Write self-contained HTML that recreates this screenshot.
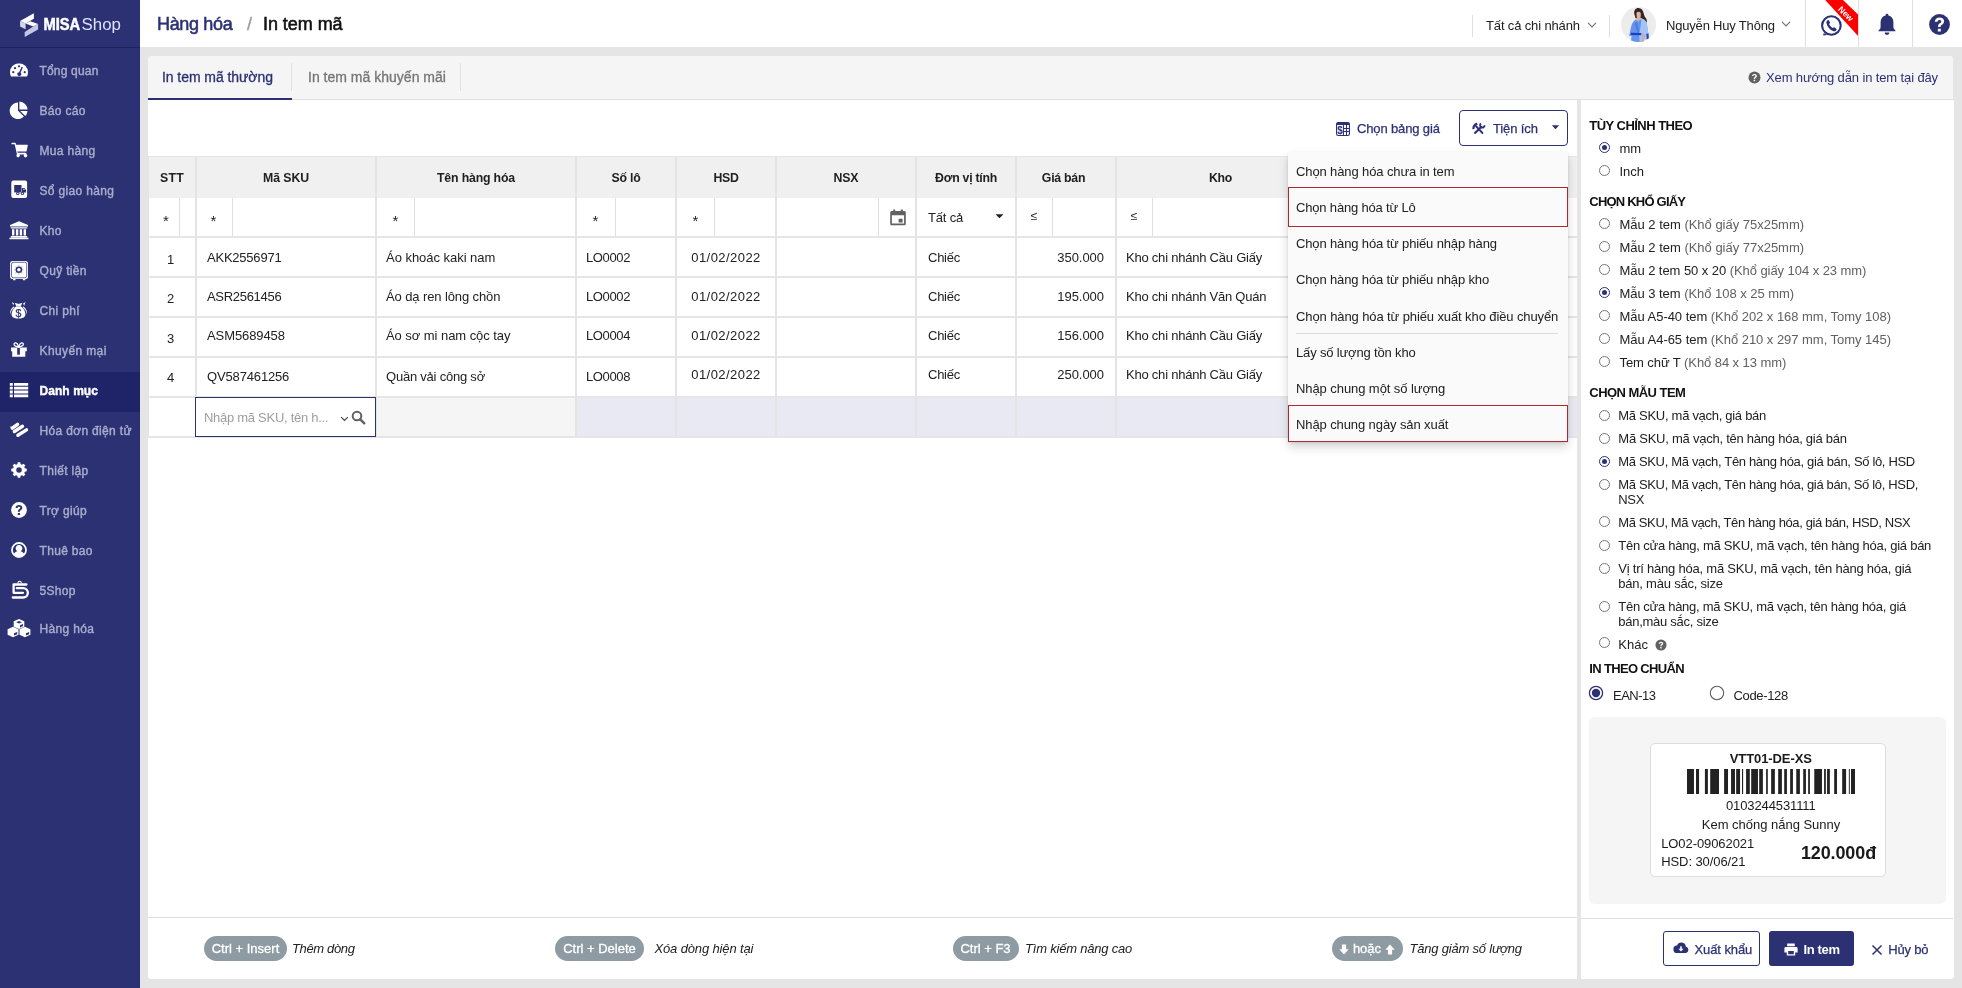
<!DOCTYPE html>
<html lang="vi">
<head>
<meta charset="utf-8">
<title>In tem mã</title>
<style>
*{box-sizing:border-box;margin:0;padding:0}
html,body{width:1962px;height:988px;overflow:hidden}
body{position:relative;background:#e5e5e5;font-family:"Liberation Sans",sans-serif;font-size:13px;color:#212121;-webkit-font-smoothing:antialiased}
.abs{position:absolute}
#sidebar,#header,#tabbar,#main,#right,#dd{will-change:transform}
.nw{white-space:nowrap}
/* ---------- sidebar ---------- */
#sidebar{position:absolute;left:0;top:0;width:140px;height:988px;background:#2b3173}
#logo{position:absolute;left:0;top:0;width:140px;height:48px;border-bottom:1px solid #1c2160}
.mi{position:absolute;left:0;width:140px;height:40px;color:#aaadcb;font-size:12px;white-space:nowrap}
.mi span{position:absolute;left:39.500px;top:11px;line-height:16px;-webkit-text-stroke:0.4px;letter-spacing:.33px}
.mi svg{position:absolute;left:9px;top:8px;width:20px;height:20px;fill:#fff;overflow:visible}
.mi.act{background:#1f2469;color:#fff;font-weight:bold}
/* ---------- header ---------- */
#header{position:absolute;left:140px;top:0;width:1822px;height:47px;background:#fff}
.vline{position:absolute;width:1px;background:#e0e0e0}
/* ---------- panels ---------- */
#tabbar{position:absolute;left:148px;top:56px;width:1805px;height:44px;background:#f5f5f5;border-bottom:1px solid #e0e0e0;border-radius:3px 3px 0 0}
#main{position:absolute;left:148px;top:100px;width:1429px;height:879px;background:#fff;border-radius:0 0 0 3px}
#right{position:absolute;left:1581px;top:100px;width:372.500px;height:879px;background:#fff;border-radius:0 0 3px 0}
/*MAINCSS*/
/* tabs */
.tab{position:absolute;top:0;height:44px;font-size:14px;line-height:18px;white-space:nowrap}
.tab span{position:absolute;top:12px;left:0}
/* table */
#grid{position:absolute;left:0;top:56px;width:1429px;height:282px}
.hd{position:absolute;top:1px;height:41px;background:#f0f0f0}
.hl{position:absolute;top:14px;font-weight:bold;font-size:12.300px;line-height:16px;white-space:nowrap;transform:translateX(-50%);color:#212121}
.cv{position:absolute;top:0;width:2px;background:#e4e4e4;height:281px}
.rh{position:absolute;left:0;width:1429px;height:2px;background:#e6e6e6}
.fv{position:absolute;top:42px;width:1px;height:38px;background:#e0e0e0}
.fs{position:absolute;top:54px;font-size:13px;line-height:16px;color:#212121;transform:translateX(-50%)}
.c{position:absolute;font-size:13px;line-height:16px;white-space:nowrap;color:#212121}
.pill{position:absolute;top:836px;height:25px;border-radius:13px;background:#8e9ba3;color:#fff;font-size:13px;line-height:25px;text-align:center;white-space:nowrap;-webkit-text-stroke:0.3px #fff}
.ptx{position:absolute;top:841px;font-size:13px;line-height:16px;font-style:italic;white-space:nowrap;color:#212121}
/*/MAINCSS*/
/*RCSS*/
#dd{position:absolute;left:1288px;top:152px;width:280px;height:290px;background:#fafafa;box-shadow:0 5px 10px rgba(0,0,0,.17),0 1px 3px rgba(0,0,0,.10);border-radius:2px}
.di{position:absolute;left:8px;font-size:13px;line-height:16px;white-space:nowrap;color:#212121}
.rb{position:absolute;left:0;width:280px;border:1.300px solid #b3282d;}
.sec{position:absolute;left:8px;font-weight:bold;font-size:13px;line-height:16px;white-space:nowrap;color:#111}
.rd{position:absolute;width:11px;height:11px;border-radius:50%;border:1px solid #757575;background:#fff}
.rd.on{border-color:#2b3173}
.rd.on:after{content:"";position:absolute;left:2px;top:2px;width:5px;height:5px;border-radius:50%;background:#2b3173}
.rl{position:absolute;font-size:13px;line-height:15px;white-space:nowrap;color:#212121}
.rl i{font-style:normal;color:#616161}
.rd2{position:absolute;width:15px;height:15px;border-radius:50%;border:1px solid #616161;background:#fff}
.rd2.on{border:1.5px solid #2b3173}
.rd2.on:after{content:"";position:absolute;left:2.500px;top:2.500px;width:7px;height:7px;border-radius:50%;background:#2b3173}
.pv{position:absolute;white-space:nowrap;color:#1a1a1a;font-family:"Liberation Sans",sans-serif}
/*/RCSS*/
/*FIT*/
#hl0{letter-spacing:0.250px}
#hl1{letter-spacing:-0.080px}
#hl2{letter-spacing:-0.164px}
#hl3{letter-spacing:-0.175px}
#hl4{letter-spacing:-0.350px}
#hl5{letter-spacing:-0.150px}
#hl6{letter-spacing:-0.260px}
#hl7{letter-spacing:-0.250px}
#hl8{letter-spacing:-0.350px}
#m-tongquan{letter-spacing:0.180px}
#m-sogiao{letter-spacing:0.339px}
#m-khuyenmai{letter-spacing:0.386px}
#m-danhmuc{letter-spacing:0.059px}
#m-hoadon{letter-spacing:0.337px}
#t1{letter-spacing:-0.343px}
#t3{letter-spacing:-0.050px}
#h-branch{letter-spacing:-0.140px}
#h-name{letter-spacing:-0.187px}
#tab1{letter-spacing:-0.067px}
#tab2{letter-spacing:0.011px}
#guide{letter-spacing:-0.126px}
#bg{letter-spacing:-0.142px}
#ti{letter-spacing:-0.114px}
#r0sku{letter-spacing:-0.222px}
#r1sku{letter-spacing:-0.300px}
#r2sku{letter-spacing:-0.089px}
#r3sku{letter-spacing:-0.150px}
#r0ten{letter-spacing:-0.031px}
#r1ten{letter-spacing:-0.111px}
#r2ten{letter-spacing:-0.058px}
#r3ten{letter-spacing:-0.220px}
#r0lo{letter-spacing:-0.380px}
#r1lo{letter-spacing:-0.380px}
#r2lo{letter-spacing:-0.380px}
#r3lo{letter-spacing:-0.380px}
#r0hsd{letter-spacing:0.444px}
#r1hsd{letter-spacing:0.444px}
#r2hsd{letter-spacing:0.444px}
#r3hsd{letter-spacing:0.444px}
#r0dvt{letter-spacing:-0.250px}
#r1dvt{letter-spacing:-0.250px}
#r2dvt{letter-spacing:-0.250px}
#r3dvt{letter-spacing:-0.250px}
#r0gia{letter-spacing:-0.033px}
#r1gia{letter-spacing:-0.033px}
#r2gia{letter-spacing:-0.033px}
#r3gia{letter-spacing:-0.033px}
#r0kho{letter-spacing:-0.224px}
#r1kho{letter-spacing:-0.229px}
#r2kho{letter-spacing:-0.224px}
#r3kho{letter-spacing:-0.224px}
#tatca{letter-spacing:-0.160px}
#ph{letter-spacing:-0.280px}
#di0{letter-spacing:-0.113px}
#di1{letter-spacing:-0.172px}
#di2{letter-spacing:-0.139px}
#di3{letter-spacing:-0.140px}
#di4{letter-spacing:-0.105px}
#di5{letter-spacing:-0.158px}
#di6{letter-spacing:-0.077px}
#di7{letter-spacing:-0.100px}
#s1{letter-spacing:-0.531px}
#s2{letter-spacing:-0.792px}
#s3{letter-spacing:-0.545px}
#s4{letter-spacing:-0.658px}
#pa0{letter-spacing:-0.015px}
#pa1{letter-spacing:-0.015px}
#pa2{letter-spacing:-0.062px}
#pa3{letter-spacing:-0.038px}
#pa4{letter-spacing:-0.034px}
#pa5{letter-spacing:-0.034px}
#pa6{letter-spacing:-0.076px}
#te0{letter-spacing:-0.291px}
#te1{letter-spacing:-0.243px}
#te2{letter-spacing:-0.337px}
#te4{letter-spacing:-0.383px}
#te5{letter-spacing:-0.253px}
#l_ean{letter-spacing:-0.500px}
#l_c128{letter-spacing:-0.343px}
#b_xk{letter-spacing:-0.088px}
#b_in{letter-spacing:-0.360px}
#b_huy{letter-spacing:-0.200px}
#pt1{letter-spacing:-0.350px}
#pt2{letter-spacing:-0.144px}
#pt3{letter-spacing:-0.206px}
#pt4{letter-spacing:-0.200px}
#pv1{letter-spacing:-0.080px}
#pv2{letter-spacing:-0.117px}
#pv3{letter-spacing:-0.016px}
#pv4{letter-spacing:-0.083px}
#pv5{letter-spacing:-0.083px}
#pv6{letter-spacing:-0.129px}
#te3{letter-spacing:-0.340px}
#te6{letter-spacing:-0.220px}
#te7{letter-spacing:-0.270px}
/*/FIT*/
</style>
</head>
<body>
<!-- SIDEBAR -->
<div id="sidebar">
  <div id="logo"><svg class="abs" style="left:0;top:0" width="140" height="47" viewBox="0 0 140 47">
<polygon points="33.85,13.26 33.85,18.76 25.6,23.53 20.09,21.02" fill="#fff"/>
<polygon points="20.09,21.02 25.6,23.53 25.6,29.16 20.09,26.41" fill="#d4d6ee"/>
<polygon points="25.6,23.53 30.18,21.21 38.13,23.96 33.24,26.41" fill="#fff"/>
<polygon points="38.13,23.96 38.13,29.46 24.68,37.11 24.68,31.91 33.24,26.41" fill="#c4c6e4"/>
<text x="43.4" y="29.8" font-family="Liberation Sans, sans-serif" font-weight="bold" font-size="16.3" fill="#fff" stroke="#fff" stroke-width="0.5" textLength="36.8" lengthAdjust="spacingAndGlyphs">MISA</text>
<text x="81.6" y="29.8" font-family="Liberation Sans, sans-serif" font-size="16.3" fill="#dfe1fb" textLength="39.4" lengthAdjust="spacingAndGlyphs">Shop</text>
</svg></div>
  <!--MENU-->
  <div class="mi" style="top:52px"><svg viewBox="0 0 20 20"><path d="M10 3.2a9 9 0 0 0-9 9c0 1.3.3 2.6.8 3.7.2.4.6.6 1 .6h14.4c.4 0 .8-.2 1-.6.5-1.100.8-2.400.8-3.700a9 9 0 0 0-9-9z"/><g fill="#2b3173"><circle cx="4.300" cy="12.200" r="1.100"/><circle cx="6" cy="8.200" r="1.100"/><circle cx="10" cy="6.300" r="1.100"/><circle cx="15.700" cy="12.200" r="1.100"/><path d="M12.600 6.700l1.300.5-2.300 5.600a1.900 1.900 0 1 1-1.500-.5z"/></g></svg><span id="m-tongquan">Tổng quan</span></div>
  <div class="mi" style="top:92px"><svg viewBox="0 0 20 20"><path d="M9 2.500v8.200l5.900 5.900A8.300 8.300 0 1 1 9 2.500z"/><path d="M10.400 1.500a8.300 8.300 0 0 1 8.100 8.100h-8.100z"/><path d="M11.200 10.900h7.300a8.300 8.300 0 0 1-2.200 5.100z"/></svg><span id="m-baocao">Báo cáo</span></div>
  <div class="mi" style="top:132px"><svg viewBox="0 0 20 20"><g transform="translate(10.900 9.700) scale(0.92) translate(-10 -10)"><path d="M1.500 2.500h3.200c.4 0 .7.300.8.600l.3 1.400h12c.5 0 .9.500.8 1l-1.300 5.800c-.1.400-.4.600-.8.600H7.300l.3 1.500h8.700c.5 0 .9.500.8 1l-.1.300a1.900 1.900 0 1 1-2.300.4H9.600a1.900 1.900 0 1 1-2.800-.2L4.300 4.200H1.500c-.400 0-.700-.400-.700-.800s.300-.900.700-.900z"/></g></svg><span id="m-muahang">Mua hàng</span></div>
  <div class="mi" style="top:172px"><svg viewBox="0 0 20 20"><path d="M4.300.6h11.800a2 2 0 0 1 2 2V16a2 2 0 0 1-2 2H4.300a2 2 0 0 1-2-2V2.600a2 2 0 0 1 2-2z"/><g fill="#2b3173"><path d="M5.200 5h7.300v7.400H5.200z"/><path d="M12.900 7.900h2.300l1.800 2.100v2.400h-4.100z"/><circle cx="8.800" cy="13.400" r="1.700"/><circle cx="13.400" cy="13.400" r="1.700"/></g><g fill="#fff"><circle cx="8.800" cy="13.400" r=".75"/><circle cx="13.400" cy="13.400" r=".75"/><path d="M14 8.700h1l1.100 1.300H14z" opacity=".6"/></g></svg><span id="m-sogiao">Sổ giao hàng</span></div>
  <div class="mi" style="top:212px"><svg viewBox="0 0 20 20"><path d="M10 1.200l9 3.800v1.500H1V5zM1.800 7.300h16.400v1.200H1.800zM3 9.200h2.400v6.300H3zM6.900 9.200h2.400v6.300H6.900zM10.700 9.200h2.400v6.300h-2.400zM14.600 9.200H17v6.300h-2.400zM1.800 16.100h16.400v1.300H1.800zM.5 17.800h19v1.500H.5z"/></svg><span id="m-kho">Kho</span></div>
  <div class="mi" style="top:252px"><svg viewBox="0 0 20 20"><rect x="1.100" y=".9" width="17.900" height="18.200" rx="2.600"/><path d="M4.100 18.800h2.400v1.400H4.100zM13.800 18.800h2.500v1.400h-2.500z"/><rect x="2.500" y="2.300" width="15.200" height="15.500" rx="2" fill="none" stroke="#2b3173" stroke-width=".7"/><g fill="#2b3173"><circle cx="9.900" cy="9.800" r="3.300"/><g opacity=".35"><circle cx="9.900" cy="5.700" r=".7"/><circle cx="9.900" cy="13.900" r=".7"/><circle cx="5.800" cy="9.800" r=".7"/><circle cx="14" cy="9.800" r=".7"/><circle cx="7" cy="6.900" r=".7"/><circle cx="12.800" cy="6.900" r=".7"/><circle cx="7" cy="12.700" r=".7"/><circle cx="12.800" cy="12.700" r=".7"/></g></g><circle cx="9.900" cy="9.800" r="1.800" fill="#fff"/></svg><span id="m-quytien">Quỹ tiền</span></div>
  <div class="mi" style="top:292px"><svg viewBox="0 0 20 20"><path d="M5.900 3.100c1.300-.7 2.500.6 3.700.6s2.500-1.300 3.600-.6L11.900 6.300c2.900 1.900 4.500 5.300 4.500 8 0 2.800-2 4.200-6.900 4.200s-6.900-1.400-6.900-4.200c0-2.700 1.700-6.100 4.600-8z"/><path d="M4.500 6.400C2 8.600.6 11.700 1.100 14.500c.5-2.800 2.100-5.400 4.400-7.200zM14.600 6.400c2.500 2.200 3.900 5.300 3.400 8.100-.5-2.800-2.100-5.400-4.400-7.200z"/><path d="M2.700 2.100l2.500 1.300-.9 1.700zM16.600 2.100l-2.500 1.300 1 2.300z"/><path d="M7.200 6.300h4.600" stroke="#2b3173" stroke-width=".7" opacity=".5"/><text x="9.400" y="16.800" text-anchor="middle" font-family="Liberation Sans, sans-serif" font-size="10.500" fill="#2b3173" stroke="#2b3173" stroke-width=".25">$</text></svg><span id="m-chiphi">Chi phí</span></div>
  <div class="mi" style="top:332px"><svg viewBox="0 0 20 20"><path d="M2 7.500h15.800v3.700H2zM3.200 11.200h13.100v5.500H3.200z"/><path d="M8.200 8h2.700v6.700H8.200z" fill="#2b3173"/><g fill="none" stroke="#fff" stroke-width="1.250"><path d="M9.700 7c-1.600-.3-4.300-.9-4.600-2.400-.2-1.100.7-1.900 1.700-1.700 1.500.3 2.400 2.400 2.900 4.100z"/><path d="M9.700 7c1.600-.3 4.300-.9 4.600-2.400.2-1.100-.7-1.900-1.700-1.700-1.500.3-2.400 2.400-2.900 4.100z"/></g></svg><span id="m-khuyenmai">Khuyến mại</span></div>
  <div class="mi act" style="top:372px"><svg viewBox="0 0 20 20"><path d="M.8 3h3v2.800h-3zM5 3h14.200v2.800H5zM.8 6.800h3v2.800h-3zM5 6.800h14.200v2.800H5zM.8 10.600h3v2.800h-3zM5 10.600h14.200v2.800H5zM.8 14.400h3v2.800h-3zM5 14.400h14.200v2.800H5z"/></svg><span id="m-danhmuc">Danh mục</span></div>
  <div class="mi" style="top:412px"><svg viewBox="0 0 20 20"><g stroke="#fff" stroke-width="3.400" stroke-linecap="round" fill="none"><path d="M3.300 8.200L8.600 4.300"/><path d="M5.400 11.500L13.500 6.300"/><path d="M8.900 15.300L17.500 9.900"/></g><path d="M.8 6.600l3 .4-.6 2.600z"/></svg><span id="m-hoadon">Hóa đơn điện tử</span></div>
  <div class="mi" style="top:452px"><svg viewBox="0 0 20 20"><g transform="translate(10 10) scale(0.86) translate(-10 -10)"><path d="M18.200 11.500v-3l-2.200-.4c-.2-.6-.4-1.100-.7-1.600l1.300-1.800-2.100-2.100-1.800 1.300c-.5-.3-1-.5-1.600-.7L10.700 1h-3l-.400 2.200c-.6.200-1.100.400-1.600.700L3.900 2.600 1.800 4.700l1.300 1.800c-.3.500-.5 1-.7 1.600L.2 8.500v3l2.200.4c.2.600.4 1.100.7 1.600l-1.300 1.800 2.100 2.100 1.800-1.300c.5.300 1 .5 1.600.7l.4 2.200h3l.4-2.200c.6-.2 1.100-.4 1.600-.7l1.800 1.300 2.100-2.100-1.300-1.800c.3-.5.5-1 .7-1.600zM9.200 13.200a3.200 3.200 0 1 1 0-6.400 3.200 3.200 0 0 1 0 6.400z" transform="translate(.8 0)"/></g></svg><span id="m-thietlap">Thiết lập</span></div>
  <div class="mi" style="top:492px"><svg viewBox="0 0 20 20"><g transform="translate(10 10) scale(0.93) translate(-10 -10)"><circle cx="10" cy="10" r="8.500"/><path fill="#2b3173" d="M10 4.500c2.100 0 3.600 1.200 3.600 3 0 1.400-.8 2.100-1.700 2.700-.7.500-.9.800-.9 1.500v.3H8.800v-.5c0-1.200.5-1.800 1.400-2.400.7-.5 1.100-.8 1.100-1.500s-.5-1.100-1.300-1.100-1.400.5-1.500 1.400H6.300c.1-2.100 1.600-3.400 3.700-3.400zM8.700 13.200h2.400v2.300H8.700z"/></g></svg><span id="m-trogiup">Trợ giúp</span></div>
  <div class="mi" style="top:532px"><svg viewBox="0 0 20 20"><g transform="translate(10 10) scale(0.93) translate(-10 -10)"><path d="M10 1.500a8.500 8.500 0 1 0 0 17 8.500 8.500 0 0 0 0-17zm0 2a6.500 6.500 0 0 1 5.300 10.300c-.9-1.400-2.400-2.300-3.500-2.500a3.600 3.600 0 1 0-3.600 0c-1.100.2-2.600 1.100-3.500 2.500A6.500 6.500 0 0 1 10 3.500z" fill-rule="evenodd"/></g></svg><span id="m-thuebao">Thuê bao</span></div>
  <div class="mi" style="top:572px"><svg viewBox="0 0 20 20"><g stroke="#fff" fill="none" stroke-linecap="round" stroke-linejoin="round"><path d="M17.400 4.500H4.600v8.300h9.400" stroke-width="2.300"/><path d="M7.800 8.200h6.400a4.650 4.650 0 0 1 0 9.300H3.800" stroke-width="2.300"/><path d="M8.900 3a1.700 1.700 0 0 1 3.400 0" stroke-width="1.100"/></g></svg><span id="m-5shop">5Shop</span></div>
  <div class="mi" style="top:610px"><svg viewBox="0 0 20 20"><g><path d="M10 1l5.300 2.300v5.400L10 11 4.700 8.700V3.300z"/><path d="M4 8.800l5.500 2.400v5.600L4 19.200l-5.400-2.400v-5.600z"/><path d="M15.900 8.800l5.500 2.400v5.600l-5.500 2.400-5.400-2.400v-5.600z"/></g><g fill="#2b3173"><path d="M10 3.100l2.900 1.200L10 5.500 7.100 4.300z"/><path d="M11 7.200l3-1.300v2.200l-3 1.300z"/><path d="M4 10.900l2.900 1.200L4 13.300l-2.900-1.200z" opacity=".0"/><path d="M5 15.300l3.200-1.400v2.300L5 17.600z"/><path d="M16.900 15.300l3.200-1.400v2.300l-3.200 1.400z"/></g></svg><span id="m-hanghoa">Hàng hóa</span></div>
  <!--/MENU-->
</div>
<!-- HEADER -->
<div id="header">
  <!--HEADER-->
  <div class="abs nw" id="t1" style="left:17px;top:12px;font-size:18px;line-height:24px;color:#2b3173;-webkit-text-stroke:0.55px #2b3173">Hàng hóa</div>
  <div class="abs nw" id="t2" style="left:107px;top:12px;font-size:18px;line-height:24px;color:#9e9e9e;-webkit-text-stroke:0.4px #9e9e9e">/</div>
  <div class="abs nw" id="t3" style="left:123px;top:12px;font-size:18px;line-height:24px;color:#111;-webkit-text-stroke:0.55px #111">In tem mã</div>
  <div class="vline" style="left:1332px;top:15px;height:22px"></div>
  <div class="abs nw" id="h-branch" style="left:1346px;top:18px;line-height:16px;font-size:13px;color:#212121">Tất cả chi nhánh</div>
  <svg class="abs" style="left:1447px;top:21px" width="10" height="8" viewBox="0 0 10 8"><path d="M1 1.800l4 4 4-4" fill="none" stroke="#757575" stroke-width="1.200"/></svg>
  <div class="vline" style="left:1469px;top:15px;height:22px"></div>
  <svg class="abs" style="left:1481px;top:7px" width="35" height="35" viewBox="0 0 35 35">
    <defs><clipPath id="avc"><circle cx="17.500" cy="17.500" r="17.500"/></clipPath></defs>
    <circle cx="17.500" cy="17.500" r="17.500" fill="#ececec"/>
    <g clip-path="url(#avc)">
      <path d="M13.200 6.500c-.3-3.300 1.600-5.500 4.300-5.500 2.900 0 4.600 2.300 5.200 5.600.4 2.300 1.500 4 2.800 5.300l.6 4.100-2.600-3.200-3-1.500h-6z" fill="#35241f"/>
      <path d="M15.600 5.400c1.100-.9 3.200-.8 4 .4.400 1.700.2 4.200-.4 5.700l-2.400 1c-1-1.700-1.600-4.900-1.200-7.100z" fill="#dcb7a5"/>
      <path d="M15.800 10.500h3.600l.6 2.500-2.800 2-2.200-2z" fill="#d9b3a2"/>
      <path d="M14.600 12.600l2.600 1.800 3.200-2.400c2.600.5 4.700 1.900 5.300 4l1.800 11.600-.2 4.200-2.700.6-1.300-3-.5 7H9.800l.7-7.600-2.300.2 1.400-6.700c.5-4 2.200-8 5-9.700z" fill="#6494ec"/>
      <path d="M20.400 12c2.600.5 4.700 1.900 5.300 4l1.800 11.600-.2 4.200-2.700.6-1.300-3-.5 7h-4.200l-.4-9.500 1.300-6.500z" fill="#a4c4f7"/>
      <path d="M16.200 14.800l2 10.500-1.400 1.400-3.200-10z" fill="#4f7fe0"/>
      <path d="M10 25.800l10.300.3v2.100l-10.800-.2z" fill="#1f3fc0"/>
      <path d="M25.300 26.800l2.200-.4.300 5.200-2 .8z" fill="#2447c8"/>
      <path d="M21.100 26.800l2-.4.900 3.200-1.300 6h-2z" fill="#d3aa9e"/>
    </g>
  </svg>
  <div class="abs nw" id="h-name" style="left:1526px;top:17.500px;line-height:16px;font-size:13px;color:#212121">Nguyễn Huy Thông</div>
  <svg class="abs" style="left:1641px;top:20px" width="10" height="8" viewBox="0 0 10 8"><path d="M1 1.800l4 4 4-4" fill="none" stroke="#757575" stroke-width="1.200"/></svg>
  <div class="vline" style="left:1665px;top:0;height:47px"></div>
  <svg class="abs" style="left:1680px;top:0" width="40" height="47" viewBox="0 0 40 47">
    <circle cx="11.400" cy="25.500" r="9.300" fill="none" stroke="#2b3173" stroke-width="2.100"/>
    <path d="M7.600 20.300c.4-.4 1-.4 1.300.100l1.100 1.800c.2.400.1.800-.2 1.100l-.7.600c.7 1.700 2 3.200 3.700 4.200l.7-.6c.3-.3.800-.3 1.100-.1l1.700 1.300c.4.300.4.900.1 1.300l-.6.700c-.6.600-1.500.800-2.300.5-3.600-1.400-6.300-4.500-7.100-8.300-.2-.8.100-1.600.7-2.100z" fill="#2b3173"/>
    <path d="M3 33.800l2.800-.4 1 1.700-3.300.3z" fill="#2b3173"/>
    <polygon points="5.200,0 23,0 38.800,15.300 38.800,36.700" fill="#f00"/>
    <text transform="translate(25.800 13.800) rotate(45)" text-anchor="middle" y="2.900" font-family="Liberation Sans, sans-serif" font-weight="bold" font-size="8.500" fill="#fff">New</text>
  </svg>
  <div class="vline" style="left:1718px;top:0;height:47px"></div>
  <svg class="abs" style="left:1737px;top:13px" width="20" height="23" viewBox="0 0 20 23">
    <path d="M10 .8c.8 0 1.400.6 1.400 1.300v.5c3 .7 5 3.300 5 6.500v4.800c0 1 .4 1.900 1.100 2.600l.9.900c.3.300.1.900-.4.900H2c-.5 0-.7-.6-.4-.9l.9-.9c.7-.7 1.100-1.600 1.100-2.600V9.100c0-3.200 2-5.800 5-6.500v-.5c0-.7.600-1.300 1.400-1.300z" fill="#2b3173"/>
    <path d="M7.600 19.500h4.800a2.400 2.400 0 0 1-4.800 0z" fill="#2b3173"/>
  </svg>
  <div class="vline" style="left:1772px;top:0;height:47px"></div>
  <svg class="abs" style="left:1789px;top:14px" width="21" height="21" viewBox="0 0 21 21">
    <circle cx="10.500" cy="10.500" r="10.400" fill="#2b3173"/>
    <path transform="translate(10.500 10.500) scale(1.180) translate(-10.500 -10.600)" d="M10.500 4.600c2.300 0 3.900 1.300 3.900 3.200 0 1.500-.8 2.300-1.900 3-.8.500-1 .9-1 1.600v.4H9.300v-.6c0-1.300.5-2 1.500-2.600.8-.5 1.200-.9 1.200-1.600 0-.8-.6-1.300-1.500-1.300s-1.600.6-1.700 1.600H6.500c.1-2.300 1.700-3.700 4-3.700zM9.100 14.200h2.500v2.400H9.100z" fill="#fff"/>
  </svg>
  <!--/HEADER-->
</div>
<!-- TAB BAR -->
<div id="tabbar">
  <!--TABS-->
  <div class="tab" id="tab1" style="left:14px;color:#2b3173;-webkit-text-stroke:0.3px #2b3173"><span>In tem mã thường</span></div>
  <div class="abs" style="left:0;top:42px;width:144px;height:2px;background:#2b3173"></div>
  <div class="vline" style="left:143px;top:7px;height:28px"></div>
  <div class="tab" id="tab2" style="left:160px;color:#757575;-webkit-text-stroke:0.3px #757575"><span>In tem mã khuyến mãi</span></div>
  <div class="vline" style="left:312px;top:7px;height:28px"></div>
  <svg class="abs" style="left:1600px;top:15px" width="13" height="13" viewBox="0 0 13 13"><circle cx="6.500" cy="6.500" r="6" fill="#616161"/><path d="M6.500 2.900c1.400 0 2.400.8 2.400 2 0 .9-.5 1.400-1.200 1.800-.5.300-.6.500-.6 1v.2H5.800v-.4c0-.8.300-1.200.9-1.600.5-.3.7-.5.7-1s-.4-.8-.9-.8c-.6 0-1 .4-1 1H4.100c0-1.400 1-2.200 2.400-2.200zM5.700 8.700h1.500v1.500H5.700z" fill="#fff"/></svg>
  <div class="abs nw" id="guide" style="left:1618px;top:14px;font-size:13px;line-height:16px;color:#2b3173">Xem hướng dẫn in tem tại đây</div>
  <!--/TABS-->
</div>
<!-- MAIN PANEL -->
<div id="main">
  <!--MAIN-->
  <svg class="abs" style="left:1188px;top:22px" width="14" height="14" viewBox="0 0 14 14"><rect x=".55" y=".55" width="12.900" height="12.900" rx="1.700" fill="#fff" stroke="#2b3173" stroke-width="1.100"/><path d="M.55 2.200A1.650 1.650 0 0 1 2.200.55h9.600a1.650 1.650 0 0 1 1.650 1.650v.9H.55z" fill="#2b3173"/><path d="M7.450 2.600v10.900M10.500 2.600v10.900M7.450 6.500h6M7.450 9.550h6" stroke="#2b3173" stroke-width="1" fill="none"/><text x="4.050" y="11.700" text-anchor="middle" font-family="Liberation Sans, sans-serif" font-weight="bold" font-size="10" fill="#2b3173">$</text></svg>
  <div class="abs nw" id="bg" style="left:1209px;top:20.700000000000003px;font-size:13px;line-height:16px;color:#2b3173;-webkit-text-stroke:0.25px #2b3173">Chọn bảng giá</div>
  <div class="abs" style="left:1311px;top:10px;width:109px;height:36px;border:1px solid #2b3173;border-radius:4px;background:#fff"></div>
  <svg class="abs" style="left:1324px;top:22px" width="14" height="14" viewBox="0 0 14 14"><g stroke="#2b3173" fill="none" stroke-linecap="round"><path d="M10.300 10.900L4.200 4.400" stroke-width="2.100"/><path d="M1.400 7.100C1.300 4.300 3 2.300 5.300 1.600" stroke-width="2.200" stroke-linecap="butt"/><path d="M3 10.900l6.200-5.900" stroke-width="2.100"/><path d="M8.900 1.500a2.250 2.250 0 1 0 3.700 1.700" stroke-width="1.900" stroke-linecap="butt"/></g></svg>
  <div class="abs nw" id="ti" style="left:1345px;top:20.700000000000003px;font-size:13px;line-height:16px;color:#2b3173;-webkit-text-stroke:0.25px #2b3173">Tiện ích</div>
  <svg class="abs" style="left:1403px;top:25px" width="9" height="5" viewBox="0 0 9 5"><path d="M.8.300h7.400L4.500 4.300z" fill="#2b3173"/></svg>
  <div id="grid">
    <div class="abs" style="left:0;top:0;width:1429px;height:1px;background:#e6e6e6"></div>
    <div class="hd" style="left:0;width:1429px"></div>
    <div class="abs" style="left:0;top:0;width:1px;height:282px;background:#e4e4e4;z-index:2"></div>
    <div class="abs" style="left:228px;top:241px;width:200px;height:40px;background:#f5f5f5"></div>
    <div class="abs" style="left:428px;top:241px;width:1001px;height:40px;background:#e8e9f2"></div>
    <div class="cv" style="left:47px"></div>
    <div class="cv" style="left:227px"></div>
    <div class="cv" style="left:427px"></div>
    <div class="cv" style="left:527px"></div>
    <div class="cv" style="left:627px"></div>
    <div class="cv" style="left:767px"></div>
    <div class="cv" style="left:867px"></div>
    <div class="cv" style="left:967px"></div>
    <div class="cv" style="left:1175px"></div>
    <div class="cv" style="left:1301px"></div>
    <div class="rh" style="top:80px"></div>
    <div class="rh" style="top:120px"></div>
    <div class="rh" style="top:160px"></div>
    <div class="rh" style="top:200px"></div>
    <div class="rh" style="top:240px"></div>
    <div class="rh" style="top:280px"></div>
    <div class="hl" id="hl0" style="left:24px">STT</div>
    <div class="hl" id="hl1" style="left:138px">Mã SKU</div>
    <div class="hl" id="hl2" style="left:328px">Tên hàng hóa</div>
    <div class="hl" id="hl3" style="left:478px">Số lô</div>
    <div class="hl" id="hl4" style="left:578px">HSD</div>
    <div class="hl" id="hl5" style="left:698px">NSX</div>
    <div class="hl" id="hl6" style="left:818px">Đơn vị tính</div>
    <div class="hl" id="hl7" style="left:915.5px">Giá bán</div>
    <div class="hl" id="hl8" style="left:1072.5px">Kho</div>
    <div class="fv" style="left:31.0px"></div>
    <div class="fv" style="left:84.0px"></div>
    <div class="fv" style="left:266.0px"></div>
    <div class="fv" style="left:466.5px"></div>
    <div class="fv" style="left:566.0px"></div>
    <div class="fv" style="left:730.0px"></div>
    <div class="fv" style="left:904.0px"></div>
    <div class="fv" style="left:1004.0px"></div>
    <div class="fs" style="left:18px;top:57px;font-size:15px">*</div>
    <div class="fs" style="left:65.5px;top:57px;font-size:15px">*</div>
    <div class="fs" style="left:247.5px;top:57px;font-size:15px">*</div>
    <div class="fs" style="left:447.5px;top:57px;font-size:15px">*</div>
    <div class="fs" style="left:547.5px;top:57px;font-size:15px">*</div>
    <div class="fs" style="left:886px;top:52px;font-size:12px">≤</div>
    <div class="fs" style="left:986px;top:52px;font-size:12px">≤</div>
    <svg class="abs" style="left:742px;top:53px" width="16" height="17" viewBox="0 0 16 17"><path d="M3.200.5h2v1.600h5.600V.5h2v1.600h1.400c.9 0 1.600.7 1.600 1.600v11c0 .9-.7 1.600-1.600 1.600H1.800c-.9 0-1.600-.7-1.600-1.600v-11c0-.9.7-1.600 1.600-1.600h1.400zM1.900 6.200v8.400h12.200V6.200zM8.600 9.800h4v3.600h-4z" fill="#616161" fill-rule="evenodd"/></svg>
    <div class="c" id="tatca" style="left:780px;top:53.8px">Tất cả</div>
    <svg class="abs" style="left:847px;top:58px" width="9" height="5" viewBox="0 0 9 5"><path d="M.5.300h8L4.500 4.300z" fill="#212121"/></svg>
    <div class="c" id="r0n" style="left:22.69999999999999px;top:95.8px;transform:translateX(-50%)">1</div>
    <div class="c" id="r0sku" style="left:59px;top:94.1px">AKK2556971</div>
    <div class="c" id="r0ten" style="left:238px;top:94.1px">Áo khoác kaki nam</div>
    <div class="c" id="r0lo" style="left:438px;top:94.1px">LO0002</div>
    <div class="c" id="r0hsd" style="left:578px;top:94.1px;transform:translateX(-50%)">01/02/2022</div>
    <div class="c" id="r0dvt" style="left:780px;top:94.1px">Chiếc</div>
    <div class="c" id="r0gia" style="left:956px;top:94.1px;transform:translateX(-100%)">350.000</div>
    <div class="c" id="r0kho" style="left:978px;top:94.1px">Kho chi nhánh Cầu Giấy</div>
    <div class="c" id="r1n" style="left:22.69999999999999px;top:134.8px;transform:translateX(-50%)">2</div>
    <div class="c" id="r1sku" style="left:59px;top:133.1px">ASR2561456</div>
    <div class="c" id="r1ten" style="left:238px;top:133.1px">Áo dạ ren lông chồn</div>
    <div class="c" id="r1lo" style="left:438px;top:133.1px">LO0002</div>
    <div class="c" id="r1hsd" style="left:578px;top:133.1px;transform:translateX(-50%)">01/02/2022</div>
    <div class="c" id="r1dvt" style="left:780px;top:133.1px">Chiếc</div>
    <div class="c" id="r1gia" style="left:956px;top:133.1px;transform:translateX(-100%)">195.000</div>
    <div class="c" id="r1kho" style="left:978px;top:133.1px">Kho chi nhánh Văn Quán</div>
    <div class="c" id="r2n" style="left:22.69999999999999px;top:174.8px;transform:translateX(-50%)">3</div>
    <div class="c" id="r2sku" style="left:59px;top:172.2px">ASM5689458</div>
    <div class="c" id="r2ten" style="left:238px;top:172.2px">Áo sơ mi nam cộc tay</div>
    <div class="c" id="r2lo" style="left:438px;top:172.2px">LO0004</div>
    <div class="c" id="r2hsd" style="left:578px;top:172.2px;transform:translateX(-50%)">01/02/2022</div>
    <div class="c" id="r2dvt" style="left:780px;top:172.2px">Chiếc</div>
    <div class="c" id="r2gia" style="left:956px;top:172.2px;transform:translateX(-100%)">156.000</div>
    <div class="c" id="r2kho" style="left:978px;top:172.2px">Kho chi nhánh Cầu Giấy</div>
    <div class="c" id="r3n" style="left:22.69999999999999px;top:214.2px;transform:translateX(-50%)">4</div>
    <div class="c" id="r3sku" style="left:59px;top:213.2px">QV587461256</div>
    <div class="c" id="r3ten" style="left:238px;top:213.2px">Quần vải công sở</div>
    <div class="c" id="r3lo" style="left:438px;top:213.2px">LO0008</div>
    <div class="c" id="r3hsd" style="left:578px;top:210.8px;transform:translateX(-50%)">01/02/2022</div>
    <div class="c" id="r3dvt" style="left:780px;top:210.8px">Chiếc</div>
    <div class="c" id="r3gia" style="left:956px;top:210.8px;transform:translateX(-100%)">250.000</div>
    <div class="c" id="r3kho" style="left:978px;top:210.8px">Kho chi nhánh Cầu Giấy</div>
    <div class="abs" style="left:47px;top:241px;width:181px;height:40px;border:1px solid #2b3173;background:#fff"></div>
    <div class="c" id="ph" style="left:56px;top:253.9px;color:#9e9e9e">Nhập mã SKU, tên h...</div>
    <svg class="abs" style="left:192px;top:260px" width="9" height="6" viewBox="0 0 9 6"><path d="M1.200 1.200l3.300 3.300 3.300-3.300" fill="none" stroke="#424242" stroke-width="1.200"/></svg>
    <svg class="abs" style="left:203px;top:254px" width="15" height="15" viewBox="0 0 15 15"><circle cx="6" cy="6" r="4.300" fill="none" stroke="#616161" stroke-width="2"/><path d="M9.300 9.300l4 4" stroke="#616161" stroke-width="2.400" stroke-linecap="round"/></svg>
  </div>
  <div class="abs" style="left:0;top:817px;width:1429px;height:1px;background:#e0e0e0"></div>
  <div class="pill" id="p1" style="left:56px;width:83px">Ctrl + Insert</div><div class="ptx" id="pt1" style="left:144px">Thêm dòng</div>
  <div class="pill" id="p2" style="left:407px;width:89px">Ctrl + Delete</div><div class="ptx" id="pt2" style="left:506.5px">Xóa dòng hiện tại</div>
  <div class="pill" id="p3" style="left:804.5px;width:66px">Ctrl + F3</div><div class="ptx" id="pt3" style="left:877px">Tìm kiếm nâng cao</div>
  <div class="pill" id="p4" style="left:1183.5px;width:71px"><svg width="10" height="11" viewBox="0 0 10 11" style="vertical-align:-1.500px"><path d="M2.900.5h4.200v4.800h2.600L5 10.500.3 5.300h2.600z" fill="#fff"/></svg> hoặc <svg width="10" height="11" viewBox="0 0 10 11" style="vertical-align:-1.500px"><path d="M2.900 10.500h4.200V5.700h2.600L5 .5.300 5.700h2.600z" fill="#fff"/></svg></div><div class="ptx" id="pt4" style="left:1261.5px">Tăng giảm số lượng</div>
  <!--/MAIN-->
</div>
<!-- RIGHT PANEL -->
<div id="right">
  <!--RIGHT-->
  <div class="sec" id="s1" style="left:8.3px;top:18.1px">TÙY CHỈNH THEO</div>
  <div class="rd on" style="left:18.0px;top:42.0px"></div>
  <div class="rl" id="l_mm" style="left:38.5px;top:41.1px">mm</div>
  <div class="rd" style="left:18.0px;top:65.2px"></div>
  <div class="rl" id="l_inch" style="left:38.5px;top:64.1px">Inch</div>
  <div class="sec" id="s2" style="left:8.3px;top:94.0px">CHỌN KHỔ GIẤY</div>
  <div class="rd" style="left:18.2px;top:118.1px"></div>
  <div class="rl" id="pa0" style="left:38.5px;top:116.5px">Mẫu 2 tem <i>(Khổ giấy 75x25mm)</i></div>
  <div class="rd" style="left:18.2px;top:141.1px"></div>
  <div class="rl" id="pa1" style="left:38.5px;top:139.5px">Mẫu 2 tem <i>(Khổ giấy 77x25mm)</i></div>
  <div class="rd" style="left:18.2px;top:164.1px"></div>
  <div class="rl" id="pa2" style="left:38.5px;top:162.5px">Mẫu 2 tem 50 x 20 <i>(Khổ giấy 104 x 23 mm)</i></div>
  <div class="rd on" style="left:18.2px;top:187.2px"></div>
  <div class="rl" id="pa3" style="left:38.5px;top:185.6px">Mẫu 3 tem <i>(Khổ 108 x 25 mm)</i></div>
  <div class="rd" style="left:18.2px;top:210.3px"></div>
  <div class="rl" id="pa4" style="left:38.5px;top:208.7px">Mẫu A5-40 tem <i>(Khổ 202 x 168 mm, Tomy 108)</i></div>
  <div class="rd" style="left:18.2px;top:233.3px"></div>
  <div class="rl" id="pa5" style="left:38.5px;top:231.7px">Mẫu A4-65 tem <i>(Khổ 210 x 297 mm, Tomy 145)</i></div>
  <div class="rd" style="left:18.2px;top:256.3px"></div>
  <div class="rl" id="pa6" style="left:38.5px;top:254.7px">Tem chữ T <i>(Khổ 84 x 13 mm)</i></div>
  <div class="sec" id="s3" style="left:8.3px;top:285.3px">CHỌN MẪU TEM</div>
  <div class="rd" style="left:18.0px;top:309.5px"></div>
  <div class="rl" id="te0" style="left:37.3px;top:307.9px">Mã SKU, mã vạch, giá bán</div>
  <div class="rd" style="left:18.0px;top:332.6px"></div>
  <div class="rl" id="te1" style="left:37.3px;top:331.0px">Mã SKU, mã vạch, tên hàng hóa, giá bán</div>
  <div class="rd on" style="left:18.0px;top:355.7px"></div>
  <div class="rl" id="te2" style="left:37.3px;top:354.1px">Mã SKU, Mã vạch, Tên hàng hóa, giá bán, Số lô, HSD</div>
  <div class="rd" style="left:18.0px;top:378.6px"></div>
  <div class="rl" id="te3" style="left:37.3px;top:377.0px">Mã SKU, Mã vạch, Tên hàng hóa, giá bán, Số lô, HSD,<br>NSX</div>
  <div class="rd" style="left:18.0px;top:416.4px"></div>
  <div class="rl" id="te4" style="left:37.3px;top:414.8px">Mã SKU, Mã vạch, Tên hàng hóa, giá bán, HSD, NSX</div>
  <div class="rd" style="left:18.0px;top:439.6px"></div>
  <div class="rl" id="te5" style="left:37.3px;top:438.0px">Tên cửa hàng, mã SKU, mã vạch, tên hàng hóa, giá bán</div>
  <div class="rd" style="left:18.0px;top:462.7px"></div>
  <div class="rl" id="te6" style="left:37.3px;top:461.1px">Vị trí hàng hóa, mã SKU, mã vạch, tên hàng hóa, giá<br>bán, màu sắc, size</div>
  <div class="rd" style="left:18.0px;top:500.6px"></div>
  <div class="rl" id="te7" style="left:37.3px;top:499.0px">Tên cửa hàng, mã SKU, mã vạch, tên hàng hóa, giá<br>bán,màu sắc, size</div>
  <div class="rd" style="left:18.0px;top:537.1px"></div>
  <div class="rl" id="te8" style="left:37.3px;top:536.9px">Khác</div>
  <svg class="abs" style="left:73.5px;top:538.5px" width="12" height="12" viewBox="0 0 13 13"><circle cx="6.500" cy="6.500" r="6" fill="#616161"/><path d="M6.500 2.900c1.400 0 2.400.8 2.400 2 0 .9-.5 1.400-1.200 1.800-.5.300-.6.500-.6 1v.2H5.800v-.4c0-.8.300-1.200.9-1.600.5-.3.7-.5.7-1s-.4-.8-.9-.8c-.6 0-1 .4-1 1H4.100c0-1.400 1-2.200 2.400-2.200zM5.700 8.700h1.500v1.500H5.700z" fill="#fff"/></svg>
  <div class="sec" id="s4" style="left:8.3px;top:561.3px">IN THEO CHUẨN</div>
  <svg class="abs" style="left:7.3px;top:585.2px" width="16" height="16" viewBox="0 0 16 16"><circle cx="8" cy="8" r="6.600" fill="#fff" stroke="#2b3173" stroke-width="1.300"/><circle cx="8" cy="8" r="4.200" fill="#2b3173"/></svg>
  <div class="rl" id="l_ean" style="left:32.0px;top:587.8px">EAN-13</div>
  <svg class="abs" style="left:127.5px;top:585.4px" width="16" height="16" viewBox="0 0 16 16"><circle cx="8" cy="8" r="6.700" fill="#fff" stroke="#616161" stroke-width="1.100"/></svg>
  <div class="rl" id="l_c128" style="left:152.5px;top:587.8px">Code-128</div>
  <div class="abs" style="left:8px;top:617px;width:357px;height:187px;background:#f5f5f5;border-radius:6px"></div>
  <div class="abs" style="left:69px;top:643px;width:236px;height:134px;background:#fff;border:1px solid #dcdcdc;border-radius:5px"></div>
  <div class="pv" id="pv1" style="left:189.8px;top:651.1px;font-size:13px;line-height:16px;font-weight:bold;transform:translateX(-50%)">VTT01-DE-XS</div>
  <svg class="abs" style="left:105.9px;top:669.2px" width="168.500" height="25.3" viewBox="0 0 168.500 25.3" fill="#222"><rect x="0.0" y="0" width="6.96" height="25.3"/><rect x="9.0" y="0" width="3.06" height="25.3"/><rect x="17.9" y="0" width="2.97" height="25.3"/><rect x="23.19" y="0" width="8.81" height="25.3"/><rect x="37.1" y="0" width="3.9" height="25.3"/><rect x="44.06" y="0" width="3.9" height="25.3"/><rect x="49.16" y="0" width="3.9" height="25.3"/><rect x="55.01" y="0" width="1.11" height="25.3"/><rect x="59.09" y="0" width="3.71" height="25.3"/><rect x="64.19" y="0" width="6.77" height="25.3"/><rect x="72.17" y="0" width="3.71" height="25.3"/><rect x="79.13" y="0" width="1.67" height="25.3"/><rect x="84.14" y="0" width="3.71" height="25.3"/><rect x="91.19" y="0" width="3.71" height="25.3"/><rect x="97.22" y="0" width="2.69" height="25.3"/><rect x="103.15" y="0" width="2.78" height="25.3"/><rect x="109.27" y="0" width="3.62" height="25.3"/><rect x="116.23" y="0" width="2.69" height="25.3"/><rect x="121.15" y="0" width="1.76" height="25.3"/><rect x="127.27" y="0" width="7.7" height="25.3"/><rect x="137.1" y="0" width="1.76" height="25.3"/><rect x="140.07" y="0" width="2.78" height="25.3"/><rect x="147.21" y="0" width="2.78" height="25.3"/><rect x="155.19" y="0" width="3.9" height="25.3"/><rect x="161.87" y="0" width="0.93" height="25.3"/><rect x="164.0" y="0" width="4.08" height="25.3"/></svg>
  <div class="pv" id="pv2" style="left:189.8px;top:698.3px;font-size:13px;line-height:16px;transform:translateX(-50%)">0103244531111</div>
  <div class="pv" id="pv3" style="left:190.0px;top:716.5px;font-size:13px;line-height:16px;transform:translateX(-50%)">Kem chống nắng Sunny</div>
  <div class="pv" id="pv4" style="left:80.2px;top:736.2px;font-size:13px;line-height:16px">LO02-09062021</div>
  <div class="pv" id="pv5" style="left:80.2px;top:754.0px;font-size:13px;line-height:16px">HSD: 30/06/21</div>
  <div class="pv" id="pv6" style="left:295.0px;top:742.6px;font-size:18px;line-height:20px;font-weight:bold;transform:translateX(-100%)">120.000đ</div>
  <div class="abs" style="left:0;top:818px;width:372px;height:1px;background:#e0e0e0"></div>
  <div class="abs" style="left:82px;top:831px;width:97px;height:35px;border:1px solid #2b3173;border-radius:3px;background:#fff"></div>
  <svg class="abs" style="left:92px;top:842px" width="16" height="12" viewBox="0 0 16 12"><path d="M12.900 4.700A4.600 4.600 0 0 0 4 3.600 3.700 3.700 0 0 0 4.200 11h8.200a3.200 3.200 0 0 0 .5-6.300z" fill="#2b3173"/><path d="M7.200 4.200h1.600v2.600h1.800L8 9.600 5.400 6.800h1.800z" fill="#fff"/></svg>
  <div class="rl" id="b_xk" style="left:113.5px;top:841.6px;line-height:16px;color:#2b3173;-webkit-text-stroke:0.25px #2b3173">Xuất khẩu</div>
  <div class="abs" style="left:188px;top:831px;width:85px;height:35px;border-radius:3px;background:#2b3173"></div>
  <svg class="abs" style="left:203px;top:842.5px" width="14" height="13" viewBox="0 0 14 13"><path d="M3.200.5h7.600v2.800H3.200zM1.800 4h10.400c.8 0 1.400.6 1.400 1.400v4.200h-2.400v2.900H2.800V9.600H.4V5.400C.4 4.600 1 4 1.800 4zM4.200 8v3.200h5.600V8z" fill="#fff" fill-rule="evenodd"/></svg>
  <div class="rl" id="b_in" style="left:222.5px;top:841.6px;line-height:16px;color:#fff;font-weight:bold">In tem</div>
  <svg class="abs" style="left:290px;top:843.5px" width="12" height="12" viewBox="0 0 12 12"><path d="M1.500 1.500l9 9M10.500 1.500l-9 9" stroke="#2b3173" stroke-width="1.500" fill="none"/></svg>
  <div class="rl" id="b_huy" style="left:307.3px;top:841.6px;line-height:16px;color:#2b3173;-webkit-text-stroke:0.25px #2b3173">Hủy bỏ</div>
  <!--/RIGHT-->
</div>
<!--DROPDOWN-->
<div id="dd">
  <div class="di" id="di0" style="top:12px">Chọn hàng hóa chưa in tem</div>
  <div class="di" id="di1" style="top:48px">Chọn hàng hóa từ Lô</div>
  <div class="di" id="di2" style="top:84px">Chọn hàng hóa từ phiếu nhập hàng</div>
  <div class="di" id="di3" style="top:120px">Chọn hàng hóa từ phiếu nhập kho</div>
  <div class="di" id="di4" style="top:157px">Chọn hàng hóa từ phiếu xuất kho điều chuyển</div>
  <div class="di" id="di5" style="top:193px">Lấy số lượng tồn kho</div>
  <div class="di" id="di6" style="top:229px">Nhập chung một số lượng</div>
  <div class="di" id="di7" style="top:265px">Nhập chung ngày sản xuất</div>
  <div class="abs" style="left:8px;top:180.6px;width:262px;height:1px;background:#dcdcdc"></div>
  <div class="rb" style="top:35px;height:40px"></div>
  <div class="rb" style="top:253px;height:37px"></div>
</div>
<!--/DROPDOWN-->
</body>
</html>
